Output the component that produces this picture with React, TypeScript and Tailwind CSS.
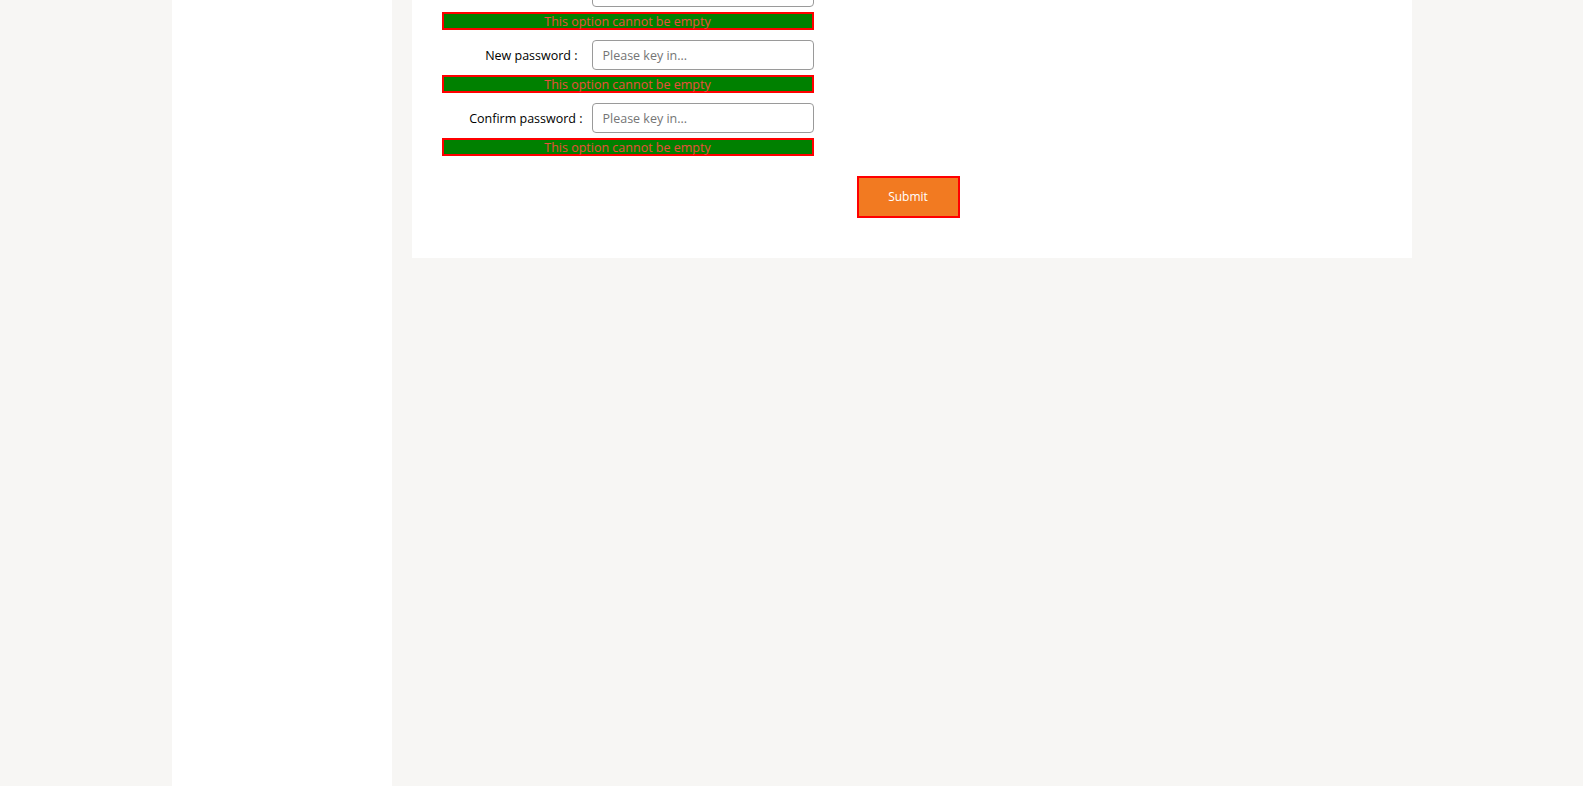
import React from "react";

function ErrorBar() {
  return (
    <div className="w-[372px] h-[18px] border-2 border-[#ff0000] bg-[#008000] flex items-center justify-center pt-[2px] text-[12.5px] leading-none text-[#ea4f3c]">
      This option cannot be empty
    </div>
  );
}

function Row({ label, pr }: { label: string; pr: string }) {
  return (
    <div className="flex items-center h-[30px]">
      <div className={`w-[150px] shrink-0 flex justify-end whitespace-nowrap pt-[2px] text-[12.5px] leading-[14px] text-[#000] ${pr}`}>{label}</div>
      <input
        type="text"
        placeholder="Please key in..."
        className="w-[222px] h-[30px] border border-[#9a9a9a] rounded-[4px] px-[10px] text-[12.5px] placeholder:text-[#757575] outline-none bg-white"
      />
    </div>
  );
}

export default function App() {
  return (
    <div
      className="h-screen overflow-hidden bg-[#f7f6f4] flex justify-center"
      style={{ fontFamily: '"Open Sans", "Noto Sans CJK SC", sans-serif' }}
    >
      <div className="w-[1240px] flex gap-[20px] h-full">
        <div className="w-[220px] shrink-0 bg-white h-full" />
        <div className="flex-1">
          <div className="bg-white overflow-hidden pl-[30px] pb-[40px]">
            <div className="mt-[-23px] flex flex-col">
              <Row label="Old password :" pr="pr-[14px]" />
              <div className="mt-[5px]"><ErrorBar /></div>
              <div className="mt-[10px]"><Row label="New password :" pr="pr-[14px]" /></div>
              <div className="mt-[5px]"><ErrorBar /></div>
              <div className="mt-[10px]"><Row label="Confirm password :" pr="pr-[9px]" /></div>
              <div className="mt-[5px]"><ErrorBar /></div>
              <div className="mt-[20px] ml-[415px]">
                <button className="w-[103px] h-[42px] border-2 border-[#ff0000] bg-[#f27a21] text-white text-[12px]">
                  Submit
                </button>
              </div>
            </div>
          </div>
        </div>
      </div>
    </div>
  );
}
